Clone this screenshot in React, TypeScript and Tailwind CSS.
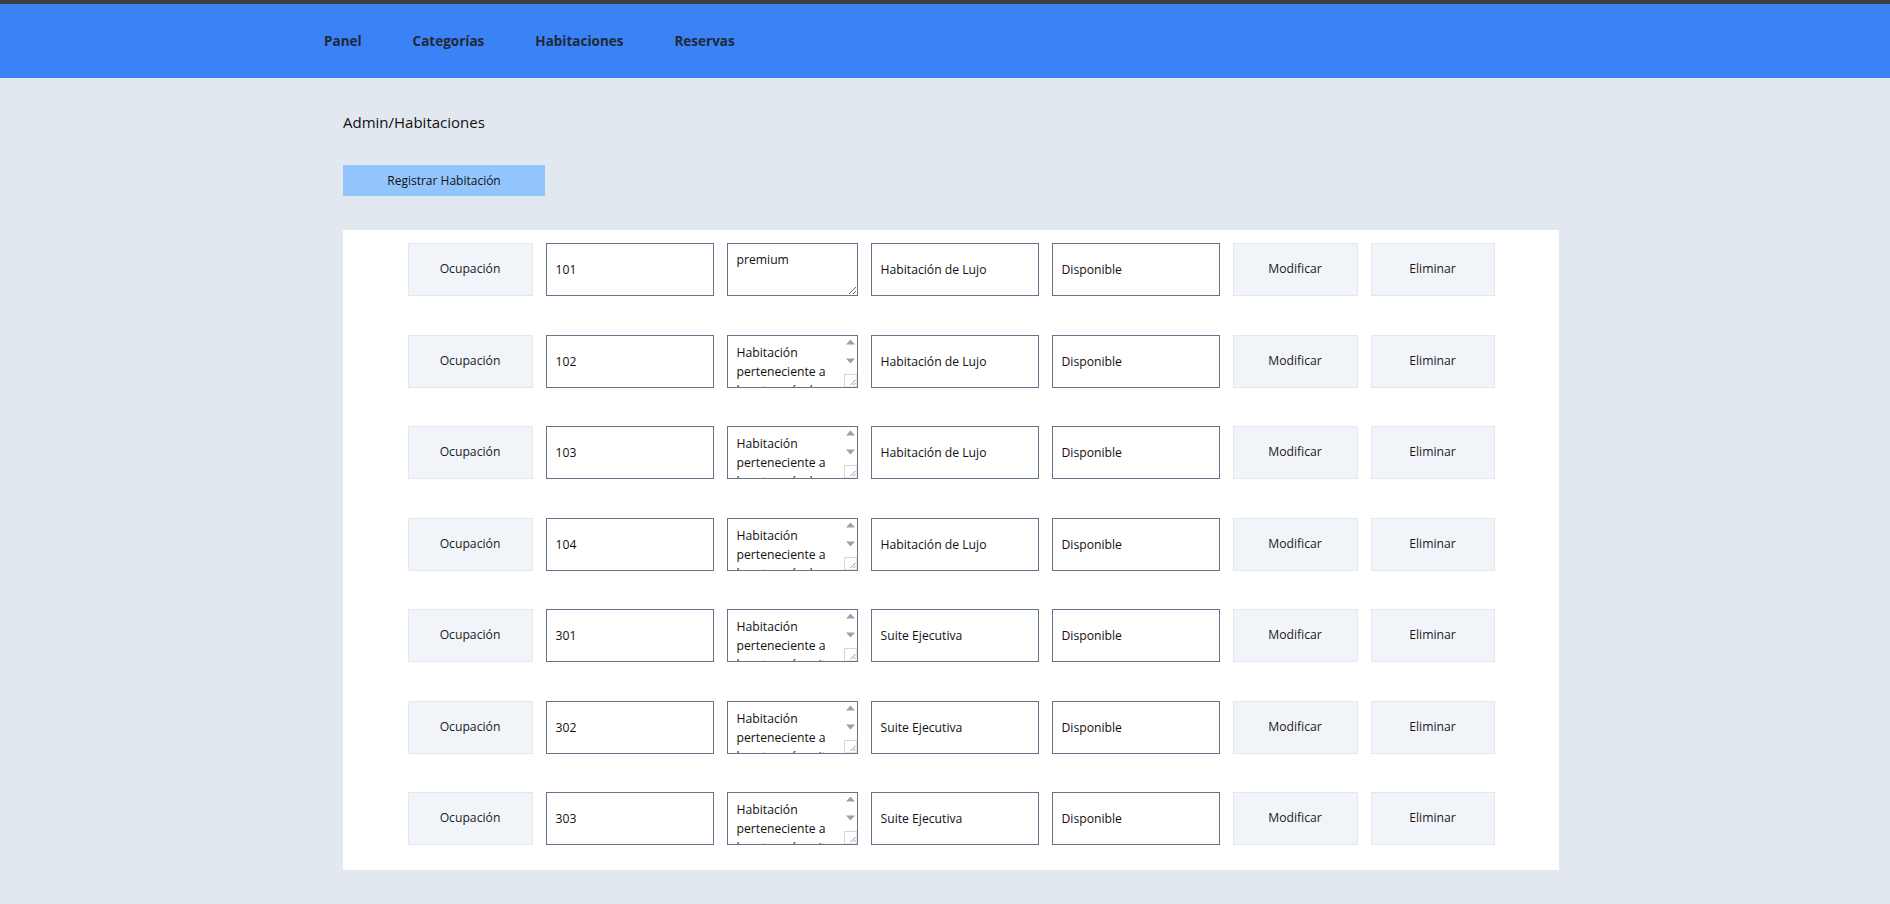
import React from "react";

type Room = { num: string; desc: string; cat: string; estado: string };

const DESC = "Habitación perteneciente a la categoría de lujo con vista al mar";
const DESC_SUITE = "Habitación perteneciente a la categoría suite ejecutiva";

const rooms: Room[] = [
  { num: "101", desc: "premium", cat: "Habitación de Lujo", estado: "Disponible" },
  { num: "102", desc: DESC, cat: "Habitación de Lujo", estado: "Disponible" },
  { num: "103", desc: DESC, cat: "Habitación de Lujo", estado: "Disponible" },
  { num: "104", desc: DESC, cat: "Habitación de Lujo", estado: "Disponible" },
  { num: "301", desc: DESC_SUITE, cat: "Suite Ejecutiva", estado: "Disponible" },
  { num: "302", desc: DESC_SUITE, cat: "Suite Ejecutiva", estado: "Disponible" },
  { num: "303", desc: DESC_SUITE, cat: "Suite Ejecutiva", estado: "Disponible" },
];

function ScrollbarOverlay() {
  return (
    <svg
      className="pointer-events-none absolute right-0 top-0"
      width="16"
      height="51"
      viewBox="0 0 16 51"
    >
      <rect x="0" y="0" width="16" height="51" fill="#ffffff" />
      <polygon points="5,8.5 14,8.5 9.5,3.5" fill="#a0a0a0" />
      <polygon points="5,22.5 14,22.5 9.5,27.5" fill="#a0a0a0" />
      <rect x="3.5" y="38.5" width="12.5" height="12.5" fill="#ffffff" stroke="#d6d6d6" strokeWidth="1" />
      <line x1="14.5" y1="44" x2="9.5" y2="49" stroke="#8a8a8a" strokeWidth="0.9" />
      <line x1="14.5" y1="47" x2="12.5" y2="49" stroke="#8a8a8a" strokeWidth="0.9" />
    </svg>
  );
}

function Row({ r, first }: { r: Room; first: boolean }) {
  return (
    <div className="flex justify-center gap-[13px]">
      <button className="h-[53px] w-[125px] border border-[#e2e8f0] bg-[#f1f5f9] text-[12.2px] text-[#1a1a1a]">
        Ocupación
      </button>
      <input
        readOnly
        value={r.num}
        className="h-[53px] w-[168px] border border-[#64748b] bg-white pl-[9px] text-[12.2px] text-[#111] outline-none"
      />
      <div className="relative h-[53px] w-[131px]">
        {first ? (
          <textarea
            readOnly
            value={r.desc}
            className="block h-[53px] w-[131px] border border-[#64748b] bg-white pl-[9px] pt-[6px] text-[12.2px] leading-[19px] text-[#111] outline-none"
          />
        ) : (
          <>
            <textarea
              readOnly
              value={r.desc}
              className="block h-[53px] w-[131px] resize-none overflow-hidden border border-[#64748b] bg-white pl-[9px] pr-[18px] pt-[7px] text-[12.2px] leading-[19px] text-[#111] outline-none"
            />
            <div className="pointer-events-none absolute right-[1px] top-[1px] h-[51px] w-[16px]">
              <ScrollbarOverlay />
            </div>
          </>
        )}
      </div>
      <input
        readOnly
        value={r.cat}
        className="h-[53px] w-[168px] border border-[#64748b] bg-white pl-[9px] text-[12.2px] text-[#111] outline-none"
      />
      <input
        readOnly
        value={r.estado}
        className="h-[53px] w-[168px] border border-[#64748b] bg-white pl-[9px] text-[12.2px] text-[#111] outline-none"
      />
      <button className="h-[53px] w-[125px] border border-[#e2e8f0] bg-[#f1f5f9] text-[12.2px] text-[#1a1a1a]">
        Modificar
      </button>
      <button className="h-[53px] w-[124px] border border-[#e2e8f0] bg-[#f1f5f9] text-[12.2px] text-[#1a1a1a]">
        Eliminar
      </button>
    </div>
  );
}

export default function App() {
  return (
    <div className="min-h-screen bg-[#e2e8f0] font-['Open_Sans',sans-serif]">
      <div className="h-[4px] bg-[#3d3d3d]" />
      <nav className="flex h-[74px] items-center bg-[#3b82f6]">
        <ul className="ml-[324px] flex gap-[51px] text-[13.5px] font-bold text-[#1f2937]">
          <li>Panel</li>
          <li>Categorías</li>
          <li>Habitaciones</li>
          <li>Reservas</li>
        </ul>
      </nav>
      <main className="ml-[343px] w-[1216px] pt-[32px] pb-[34px]">
        <h1 className="text-[15px] leading-[24px] text-[#111]">Admin/Habitaciones</h1>
        <button className="mt-[31px] h-[31px] w-[202px] bg-[#93c5fd] text-[12px] text-[#111]">
          Registrar Habitación
        </button>
        <section className="mt-[34px] flex flex-col gap-[38.5px] bg-white pb-[25px] pt-[13px]">
          {rooms.map((r, i) => (
            <Row key={r.num} r={r} first={i === 0} />
          ))}
        </section>
      </main>
    </div>
  );
}
